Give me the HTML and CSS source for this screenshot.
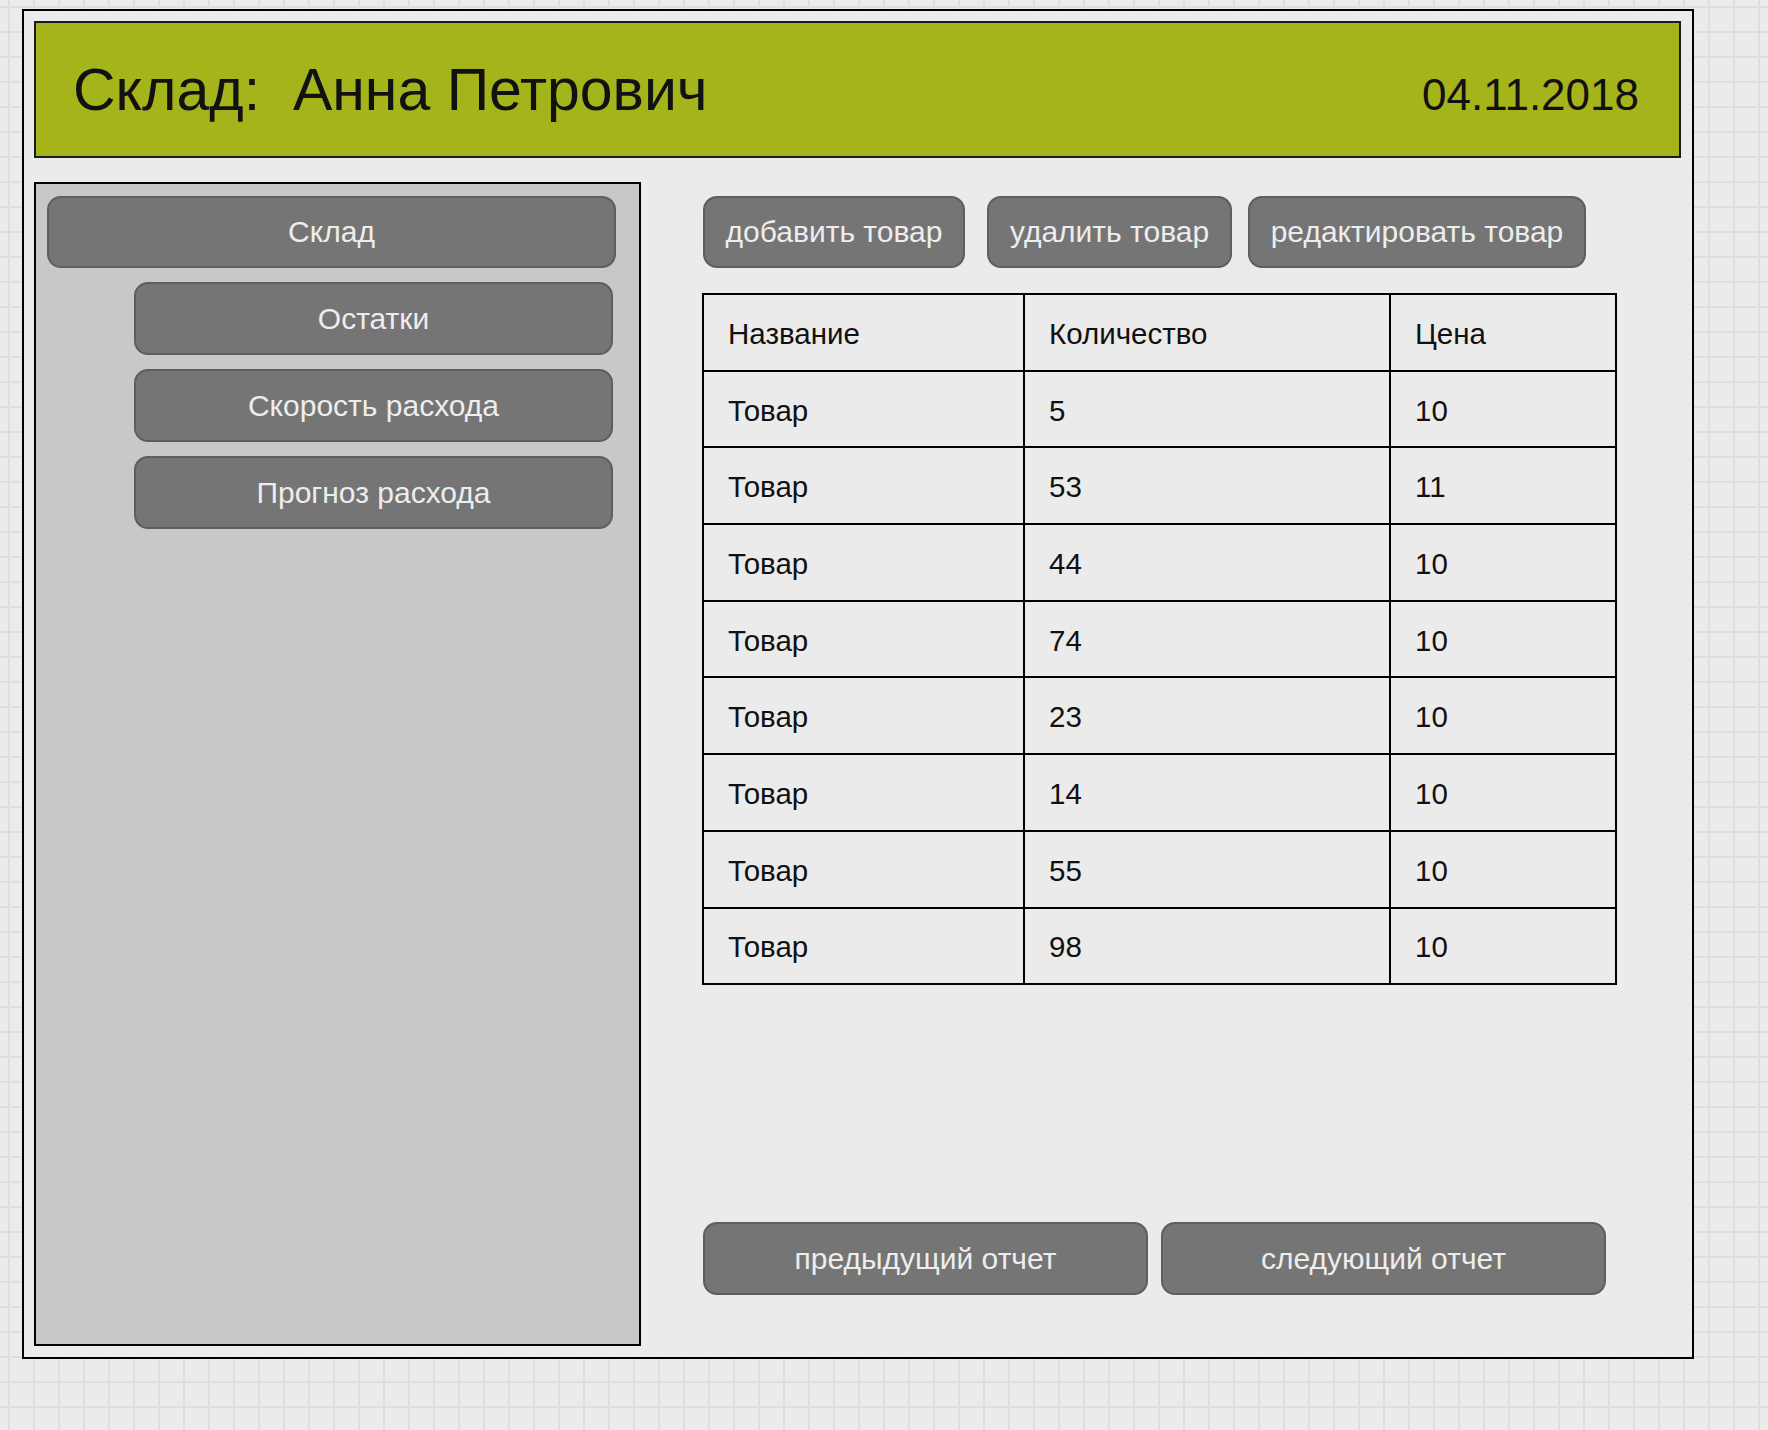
FILE: index.html
```html
<!DOCTYPE html>
<html lang="ru">
<head>
<meta charset="utf-8">
<title>Склад</title>
<link rel="stylesheet" href="styles.css">
</head>
<body>
<div class="frame">
  <header class="topbar">
    <h1 class="title">Склад:&nbsp; Анна Петрович</h1>
    <div class="date">04.11.2018</div>
  </header>
  <div class="content">
    <nav class="sidebar">
      <button class="btn nav-main">Склад</button>
      <button class="btn nav-sub">Остатки</button>
      <button class="btn nav-sub">Скорость расхода</button>
      <button class="btn nav-sub">Прогноз расхода</button>
    </nav>
    <main class="main">
      <div class="actions">
        <button class="btn act act-add">добавить товар</button>
        <button class="btn act act-del">удалить товар</button>
        <button class="btn act act-edit">редактировать товар</button>
      </div>
      <table class="goods">
        <colgroup>
          <col class="c-name">
          <col class="c-qty">
          <col class="c-price">
        </colgroup>
        <tr><td>Название</td><td>Количество</td><td>Цена</td></tr>
        <tr><td>Товар</td><td>5</td><td>10</td></tr>
        <tr><td>Товар</td><td>53</td><td>11</td></tr>
        <tr><td>Товар</td><td>44</td><td>10</td></tr>
        <tr><td>Товар</td><td>74</td><td>10</td></tr>
        <tr><td>Товар</td><td>23</td><td>10</td></tr>
        <tr><td>Товар</td><td>14</td><td>10</td></tr>
        <tr><td>Товар</td><td>55</td><td>10</td></tr>
        <tr><td>Товар</td><td>98</td><td>10</td></tr>
      </table>
      <div class="pager">
        <button class="btn page">предыдущий отчет</button>
        <button class="btn page">следующий отчет</button>
      </div>
    </main>
  </div>
</div>
</body>
</html>
```
FILE: styles.css
```css
* { box-sizing: border-box; }

html, body {
  margin: 0;
  padding: 0;
}

body {
  width: 1768px;
  height: 1430px;
  overflow: hidden;
  background-color: #ebebeb;
  background-image:
    linear-gradient(to right, #dedede 2px, transparent 2px),
    linear-gradient(to bottom, #dedede 2px, transparent 2px);
  background-size: 25px 25px;
  background-position: 8px 6px;
  font-family: "Liberation Sans", Arial, sans-serif;
  color: #111;
  padding: 9px 0 0 22px;
}

.frame {
  width: 1672px;
  height: 1350px;
  border: 2px solid #000;
  background: #ebebeb;
  padding: 10px 11px 11px 10px;
  display: flex;
  flex-direction: column;
}

.topbar {
  height: 137px;
  background: #a4b41a;
  border: 2px solid #1c1c1c;
  display: flex;
  align-items: baseline;
  justify-content: space-between;
  padding: 36px 40px 0 37px;
  flex-shrink: 0;
}

.title {
  margin: 0;
  font-weight: normal;
  font-size: 59px;
  line-height: 62px;
}

.date {
  font-size: 44px;
  line-height: 62px;
}

.content {
  flex: 1;
  display: flex;
  margin-top: 24px;
}

.sidebar {
  width: 607px;
  border: 2px solid #000;
  background: #c8c8c8;
  padding: 12px 0 0 11px;
  display: flex;
  flex-direction: column;
  align-items: flex-start;
}

.btn {
  font-family: "Liberation Sans", Arial, sans-serif;
  font-size: 30px;
  color: #ededed;
  background: #757575;
  border: 2px solid #5e5e5e;
  border-radius: 14px;
  height: 72px;
  padding: 0;
  display: flex;
  align-items: center;
  justify-content: center;
  white-space: nowrap;
}

.nav-main {
  width: 569px;
}

.nav-sub {
  width: 479px;
  height: 73px;
  margin-left: 87px;
  margin-top: 14px;
}

.main {
  flex: 1;
  margin-left: 62px;
  padding-top: 14px;
  padding-bottom: 51px;
  display: flex;
  flex-direction: column;
}

.actions {
  display: flex;
}

.act-add { width: 262px; }
.act-del { width: 245px; margin-left: 22px; }
.act-edit { width: 338px; margin-left: 16px; }

.goods {
  margin-top: 25px;
  margin-left: -1px;
  width: 913px;
  border-collapse: collapse;
  table-layout: fixed;
  font-size: 29.5px;
}

.c-name { width: 321px; }
.c-qty { width: 366px; }
.c-price { width: 226px; }

.goods td {
  border: 2px solid #000;
  height: 76.7px;
  padding: 3px 0 0 24px;
  vertical-align: middle;
}

.pager {
  margin-top: auto;
  display: flex;
  gap: 13px;
}

.page {
  width: 445px;
  height: 73px;
}
```
